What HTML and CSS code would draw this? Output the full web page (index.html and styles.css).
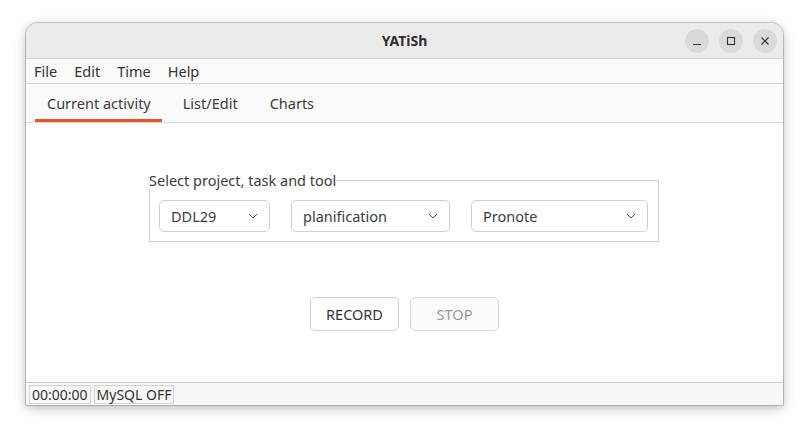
FILE: index.html
```html
<!DOCTYPE html>
<html>
<head>
<meta charset="utf-8">
<link rel="stylesheet" href="styles.css">
</head>
<body>
<div class="window">
  <div class="titlebar">
    <div class="title">YATiSh</div>
    <div class="wbtns">
      <span class="wbtn"><svg width="24" height="24" viewBox="0 0 24 24"><line x1="8" y1="15.5" x2="16" y2="15.5" stroke="#333" stroke-width="1.2"/></svg></span>
      <span class="wbtn"><svg width="24" height="24" viewBox="0 0 24 24"><rect x="8.5" y="8.5" width="7" height="7" fill="none" stroke="#333" stroke-width="1.1"/></svg></span>
      <span class="wbtn"><svg width="24" height="24" viewBox="0 0 24 24"><path d="M8.5 8.5 L15.5 15.5 M15.5 8.5 L8.5 15.5" stroke="#333" stroke-width="1.2"/></svg></span>
    </div>
  </div>
  <div class="menubar">
    <span class="menu">File</span>
    <span class="menu">Edit</span>
    <span class="menu">Time</span>
    <span class="menu">Help</span>
  </div>
  <div class="tabbar">
    <span class="tab active">Current activity</span>
    <span class="tab">List/Edit</span>
    <span class="tab">Charts</span>
  </div>
  <div class="content">
    <fieldset class="group">
      <legend>Select project, task and tool</legend>
      <div class="combos">
        <div class="combo w1"><span>DDL29</span><svg width="12" height="8" viewBox="0 0 12 8"><path d="M2 2 L6 6 L10 2" fill="none" stroke="#555" stroke-width="1"/></svg></div>
        <div class="combo w2"><span>planification</span><svg width="12" height="8" viewBox="0 0 12 8"><path d="M2 2 L6 6 L10 2" fill="none" stroke="#555" stroke-width="1"/></svg></div>
        <div class="combo w3"><span>Pronote</span><svg width="12" height="8" viewBox="0 0 12 8"><path d="M2 2 L6 6 L10 2" fill="none" stroke="#555" stroke-width="1"/></svg></div>
      </div>
    </fieldset>
    <div class="actions">
      <button class="btn">RECORD</button>
      <button class="btn disabled">STOP</button>
    </div>
  </div>
  <div class="statusbar">
    <span class="cell">00:00:00</span>
    <span class="cell">MySQL OFF</span>
  </div>
</div>
</body>
</html>
```

FILE: styles.css
```css
* { box-sizing: border-box; }
html, body {
  margin: 0;
  padding: 0;
  background: #ffffff;
  width: 809px;
  height: 434px;
  overflow: hidden;
}
body {
  font-family: "Noto Sans", "DejaVu Sans", sans-serif;
  font-size: 14.5px;
  color: #3c3c3c;
  padding: 23px 0 0 26px;
}
.window {
  width: 757px;
  height: 382px;
  display: flex;
  flex-direction: column;
  border-radius: 12px 12px 0 0;
  box-shadow: 0 0 0 1px rgba(0,0,0,0.18), 0 3px 12px rgba(0,0,0,0.28);
  background: #fafafa;
  overflow: hidden;
}
.titlebar {
  height: 36px;
  flex: none;
  background: #ebebeb;
  border-bottom: 1px solid #d6d6d6;
  display: flex;
  align-items: center;
  justify-content: center;
  position: relative;
}
.title {
  font-weight: bold;
  font-size: 14px;
  color: #2e2e2e;
}
.wbtns {
  position: absolute;
  right: 6px;
  top: 6px;
  display: flex;
  gap: 10px;
}
.wbtn {
  width: 24px;
  height: 24px;
  border-radius: 50%;
  background: #dadada;
  display: block;
}
.wbtn svg { display: block; }
.menubar {
  height: 25px;
  flex: none;
  background: #fafafa;
  border-bottom: 1px solid #d6d6d6;
  display: flex;
  align-items: center;
  padding-left: 8px;
  gap: 17px;
}
.menu { color: #333; }
.tabbar {
  height: 39px;
  flex: none;
  background: #fafafa;
  border-bottom: 1px solid #d9d9d9;
  display: flex;
  padding-left: 9px;
}
.tab {
  padding: 0 11px 0 12px;
  display: flex;
  align-items: center;
  height: 38px;
  color: #3c3c3c;
  border-bottom: 3px solid transparent;
  padding-top: 2px;
  margin-right: 9px;
}
.tab.active {
  border-bottom-color: #e95420;
}
.content {
  flex: 1;
  background: #ffffff;
  display: flex;
  flex-direction: column;
  align-items: center;
  padding-top: 48px;
}
.group {
  width: 510px;
  margin: 0 0 0 -1px;
  padding: 9px 10px 9px 9px;
  border: 1px solid #cfcfcf;
  min-width: 0;
}
.group legend {
  padding: 0;
  margin-left: -10px;
  color: #3c3c3c;
  line-height: 18px;
}
.combos {
  display: flex;
  gap: 21px;
  margin-top: 2px;
}
.combo {
  height: 32px;
  border: 1px solid #d0d0d0;
  border-radius: 5px;
  background: #ffffff;
  display: flex;
  align-items: center;
  justify-content: space-between;
  padding: 0 10px 0 11px;
  color: #3c3c3c;
}
.combo svg { display: block; }
.w1 { width: 111px; }
.w2 { width: 159px; }
.w3 { width: 177px; }
.actions {
  display: flex;
  gap: 11px;
  margin-top: 55px;
}
.btn {
  width: 89px;
  height: 34px;
  border: 1px solid #cfcfcf;
  border-radius: 5px;
  background: #ffffff;
  font-family: inherit;
  font-size: 14.5px;
  color: #333;
  padding: 0;
}
.btn.disabled {
  background: #fafafa;
  color: #9a9a9a;
  border-color: #d8d8d8;
}
.statusbar {
  height: 23px;
  flex: none;
  background: #f8f8f8;
  border-top: 1px solid #cdcdcd;
  display: flex;
  align-items: center;
  padding-left: 3px;
  gap: 3px;
  font-size: 14px;
}
.cell {
  border: 1px solid #d4d4d4;
  height: 19px;
  line-height: 17px;
  padding: 0 2px;
  color: #333;
}
```
